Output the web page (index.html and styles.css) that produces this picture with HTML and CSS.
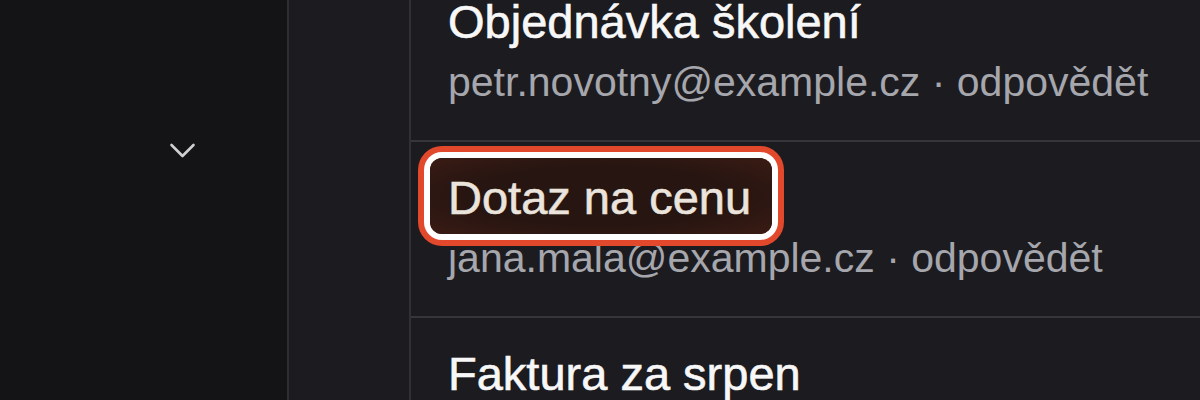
FILE: index.html
```html
<!DOCTYPE html>
<html lang="cs">
<head>
<meta charset="utf-8">
<title>Pošta</title>
<link rel="stylesheet" href="styles.css">
</head>
<body>
<div class="app">
  <aside class="sidebar">
    <button class="toggle" aria-label="Rozbalit">
      <svg width="27" height="17" viewBox="0 0 27 17" fill="none" stroke="#cfcfd3" stroke-width="2.6" stroke-linecap="round" stroke-linejoin="round"><path d="M2.5 3 L13.5 14 L24.5 3"/></svg>
    </button>
  </aside>
  <nav class="rail"></nav>
  <main class="list">
    <div class="rows">
      <article class="row">
        <div class="title">Objednávka školení</div>
        <div class="meta">petr.novotny@example.cz · odpovědět</div>
      </article>
      <article class="row">
        <div class="title"><span class="hl">Dotaz na cenu</span></div>
        <div class="meta">jana.mala@example.cz · odpovědět</div>
      </article>
      <article class="row">
        <div class="title">Faktura za srpen</div>
      </article>
    </div>
  </main>
</div>
</body>
</html>
```

FILE: styles.css
```css
* { box-sizing: border-box; }
html, body { margin: 0; height: 100%; }
body {
  background: #1c1c20;
  font-family: "Liberation Sans", Arial, sans-serif;
  overflow: hidden;
}
.app {
  display: flex;
  height: 400px;
}
.sidebar {
  width: 289px;
  flex: none;
  background: #141416;
  border-right: 2px solid #2e2e32;
  padding: 142px 0 0 169px;
}
.toggle {
  background: none;
  border: 0;
  padding: 0;
  width: 27px;
  height: 17px;
  display: block;
}
.toggle svg { display: block; }
.rail {
  width: 122px;
  flex: none;
  background: #1c1c20;
  border-right: 2px solid #303035;
}
.list {
  flex: 1;
  background: #1c1c20;
  overflow: hidden;
}
.rows {
  margin-top: -34px;
}
.row {
  border-bottom: 2px solid #35353a;
  padding: 29px 20px 0 37px;
  height: 176px;
}
.title {
  font-size: 47px;
  line-height: 54px;
  color: #f7f7f7;
  white-space: nowrap;
  -webkit-text-stroke: 0.6px currentColor;
}
.meta {
  margin-top: 9px;
  font-size: 41px;
  line-height: 48px;
  color: #a6a6ad;
  white-space: nowrap;
}
.hl {
  position: relative;
  z-index: 0;
  color: #ebe4dc;
}
.hl::before {
  content: "";
  position: absolute;
  z-index: -1;
  top: -13px;
  bottom: -10px;
  left: -18px;
  right: -21px;
  border-radius: 12px;
  background: radial-gradient(ellipse at center, #271511 55%, #3a1b14 100%);
  box-shadow: 0 0 0 6px #ffffff, 0 0 0 12px #e2482c;
}
```
